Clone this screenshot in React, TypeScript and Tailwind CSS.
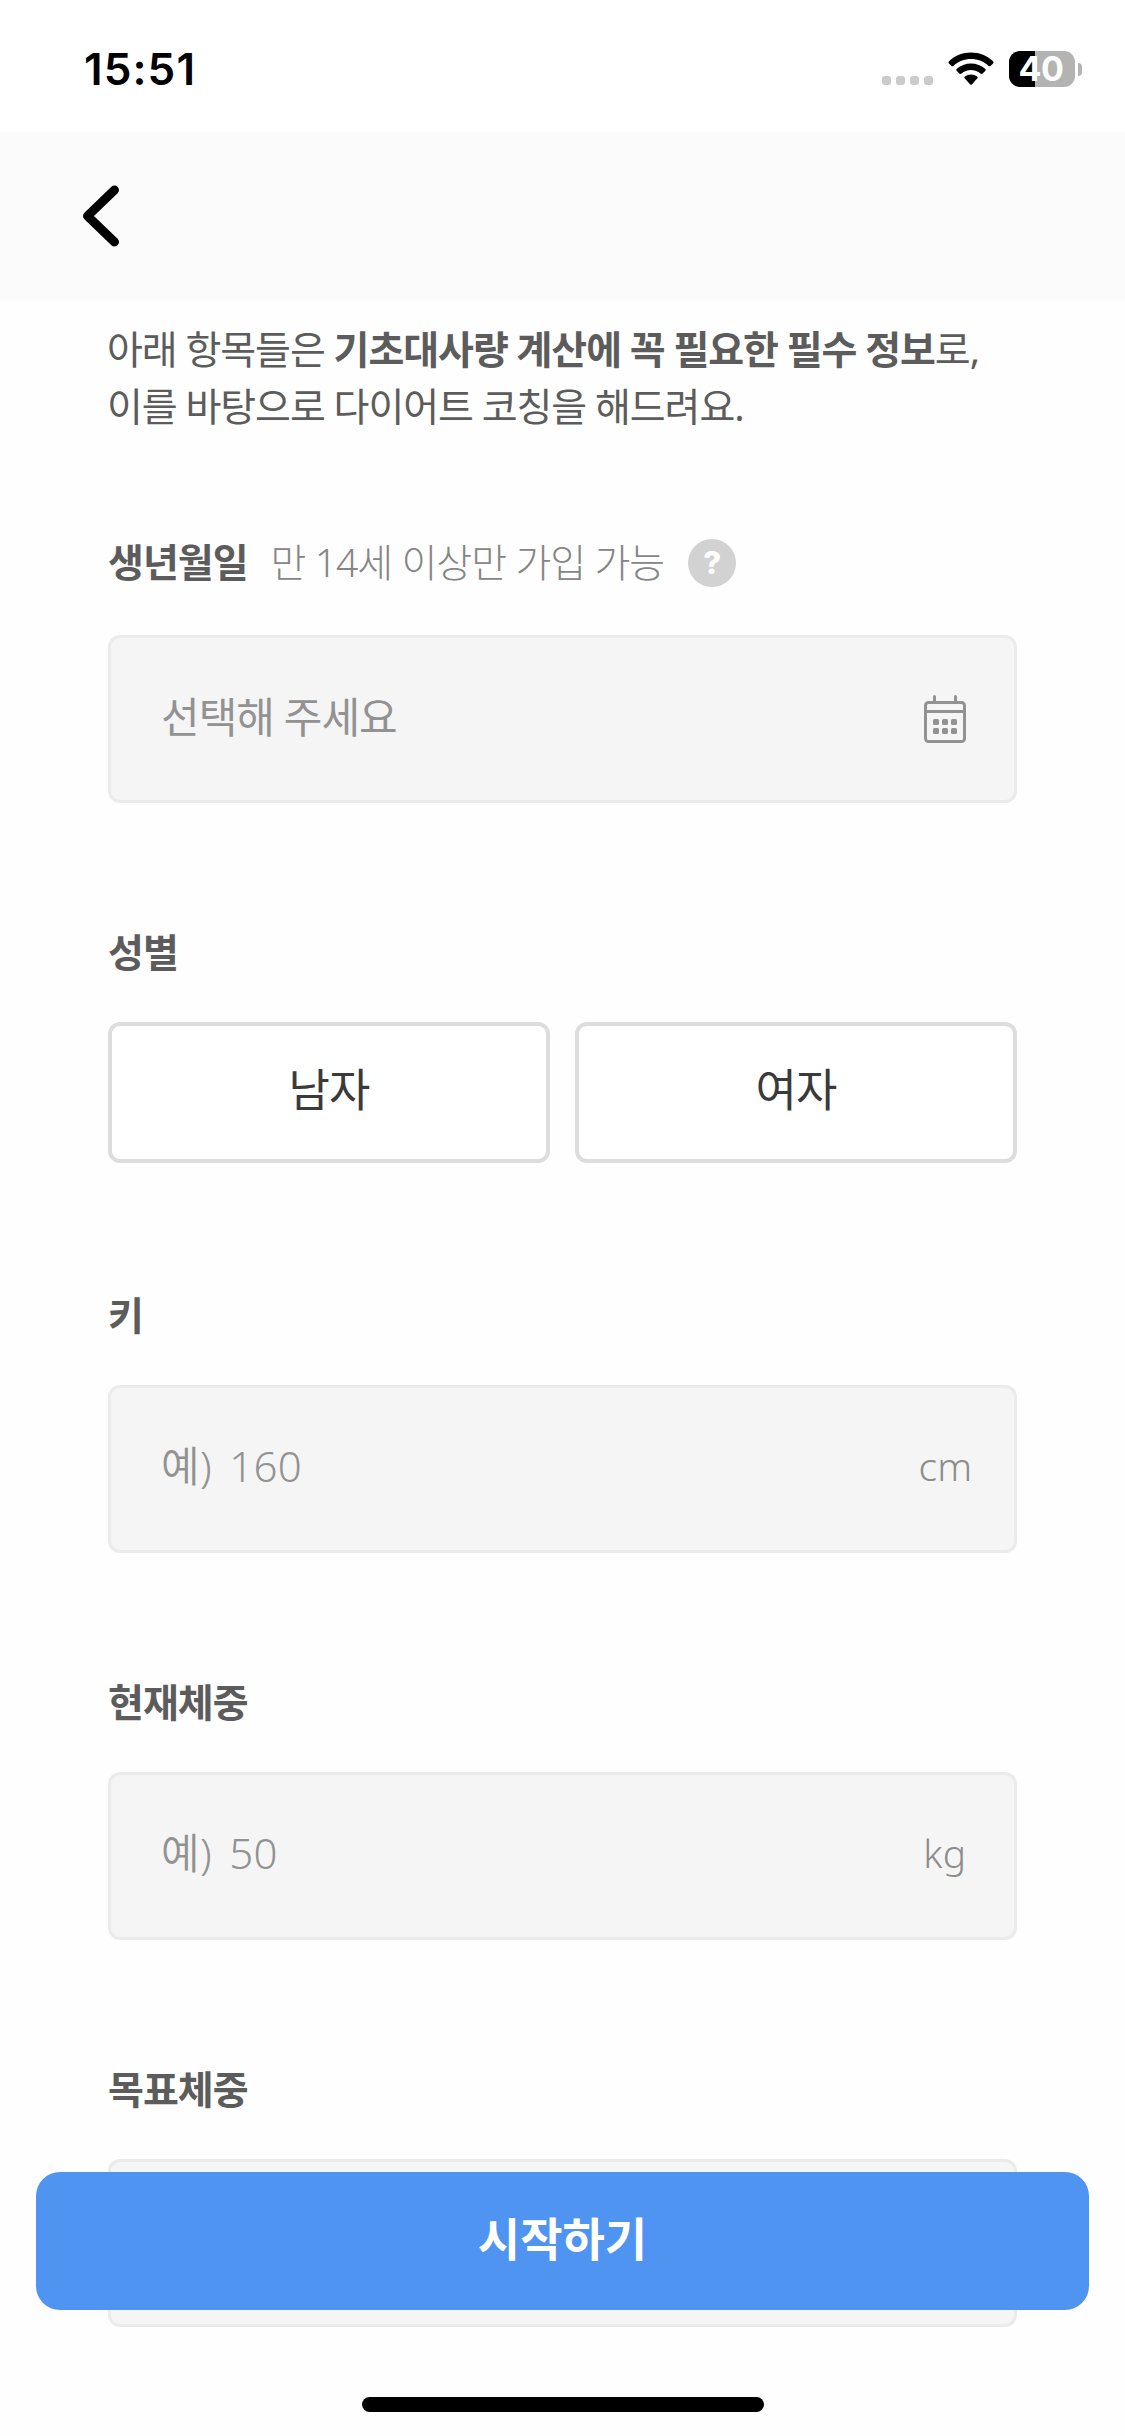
import { useState } from 'react'
import type { ReactNode } from 'react'

function StatusBar() {
  return (
    <div className="flex h-[132px] items-start justify-between bg-white pr-[43px] pl-[84px]">
      <div className="mt-[42px] font-['Inter',sans-serif] text-[44px] leading-[54px] font-semibold tracking-[1.1px] text-black">15:51</div>

      <div className="mt-[51px] flex h-9 items-center">
        <div className="mt-[23px] flex gap-[5px]">
          {[0, 1, 2, 3].map((dot) => (
            <span key={dot} className="size-[9px] rounded-[3px] bg-[#cbcbcb]" />
          ))}
        </div>

        {/* Wifi */}
        <svg className="ml-[15px] h-[34px] w-[46px]" viewBox="0 0 46 34" fill="black">
          <path d="M23 0.6c8.6 0 16.200 3.300 22 8.700.7.700.7 1.400.1 2.100l-2.400 2.400c-.7.700-1.400.7-2.100.1C35.900 9.600 29.800 7.100 23 7.100S10.100 9.600 5.400 13.900c-.7.600-1.400.6-2.100-.1L.9 11.400c-.6-.7-.6-1.400.1-2.100C6.800 3.900 14.400.6 23 .6z" />
          <path d="M23 11.400c5.400 0 10.300 2 14.100 5.400.8.700.8 1.400.1 2.100l-2.600 2.600c-.7.700-1.300.7-2.100.1-2.600-2.200-5.900-3.500-9.500-3.500s-6.900 1.300-9.500 3.500c-.8.600-1.400.6-2.100-.1l-2.600-2.600c-.7-.7-.7-1.400.1-2.100C12.700 13.400 17.600 11.400 23 11.400z" />
          <path d="M23 22.400c2.300 0 4.400.8 6.100 2.100.8.600.8 1.400.1 2.100l-5.200 5.600c-.7.700-1.300.7-2 0l-5.200-5.600c-.7-.7-.7-1.500.1-2.100 1.700-1.300 3.800-2.100 6.100-2.100z" />
        </svg>

        {/* Battery */}
        <div className="ml-[15px] flex h-9 w-[66px] items-center justify-center rounded-[11px] bg-linear-to-r from-black from-40% to-[#b3b3b3] to-40% pr-0.5 font-['Inter',sans-serif] text-[34px] leading-9 font-bold tracking-[-0.5px] text-white">
          40
        </div>
        <span className="ml-[3px] h-[13px] w-1 rounded-r-full bg-[#b3b3b3]" />
      </div>
    </div>
  )
}

function CalendarIcon() {
  return (
    <svg className="h-12 w-[42px]" viewBox="0 0 42 48" fill="none" stroke="#929292">
      <path d="M10.500 1.500V7M31.500 1.500V7" strokeWidth="3" strokeLinecap="round" />
      <rect x="1.500" y="7.500" width="39" height="39" rx="3" strokeWidth="3" />
      <path d="M1.500 16.500H40.500" strokeWidth="3" />
      <g fill="#929292" stroke="none">
        <rect x="9" y="24" width="6" height="6" rx="1.500" />
        <rect x="18" y="24" width="6" height="6" rx="1.500" />
        <rect x="27" y="24" width="6" height="6" rx="1.500" />
        <rect x="9" y="33" width="6" height="6" rx="1.500" />
        <rect x="18" y="33" width="6" height="6" rx="1.500" />
        <rect x="27" y="33" width="6" height="6" rx="1.500" />
      </g>
    </svg>
  )
}

function Label({ children }: { children: ReactNode }) {
  return <span className="text-[39px] leading-[58px] font-bold tracking-[-1px] text-[#5c5c5c]">{children}</span>
}

function Field({ children }: { children?: ReactNode }) {
  return (
    <div className="flex h-[168px] w-full items-center justify-between rounded-xl border-3 border-[#ebebeb] bg-[#f5f5f5] pl-[50px] text-[#929292]">
      {children}
    </div>
  )
}

function NumberField({ label, example, unit }: { label: string; example: string; unit: ReactNode }) {
  return (
    <section>
      <div className="flex h-[58px] items-center">
        <Label>{label}</Label>
      </div>
      <div className="mt-[41px]">
        <Field>
          <span className="pb-1.5 text-[42px] leading-[60px] font-[350] tracking-[0.3px] [word-spacing:6px]">{example}</span>
          {unit}
        </Field>
      </div>
    </section>
  )
}

export default function App() {
  const [gender, setGender] = useState('')

  return (
    <div className="relative flex h-[2436px] w-[1125px] flex-col overflow-hidden bg-[#fefefe] font-['Noto_Sans','Noto_Sans_CJK_KR',sans-serif]">
      <StatusBar />

      <header className="flex h-[168px] shrink-0 items-center bg-[#fbfbfb] pl-[81px]">
        <button aria-label="뒤로">
          <svg className="h-[62px] w-10" viewBox="0 0 40 62" fill="none" stroke="black" strokeWidth="9" strokeLinecap="round" strokeLinejoin="round">
            <path d="M33.500 5L6.500 31L33.500 57" />
          </svg>
        </button>
      </header>

      <main className="flex flex-col px-[108px] pt-5">
        <p className="-ml-px text-[39px] leading-[57px] tracking-[-1.050px] [word-spacing:-0.3px] whitespace-nowrap text-[#5c5c5c]">
          아래 항목들은 <b>기초대사량 계산에 꼭 필요한 필수 정보</b>로,
          <br />
          이를 바탕으로 다이어트 코칭을 해드려요.
        </p>

        {/* Birthday */}
        <section className="mt-[99px]">
          <div className="flex h-[58px] items-center">
            <Label>생년월일</Label>
            <span className="ml-[23px] text-[39px] leading-[58px] font-light tracking-[-0.950px] text-[#858585]">만 14세 이상만 가입 가능</span>
            <span className="ml-6 mt-0.5 flex size-12 items-center justify-center rounded-full bg-[#d2d2d2] font-['Inter',sans-serif] text-[31px] font-extrabold text-white">
              ?
            </span>
          </div>
          <div className="mt-[44px]">
            <Field>
              <span className="pb-1 text-[42px] leading-[60px] tracking-[-1px]">선택해 주세요</span>
              <span className="mr-12">
                <CalendarIcon />
              </span>
            </Field>
          </div>
        </section>

        {/* Gender */}
        <section className="mt-[120px]">
          <div className="flex h-[58px] items-center">
            <Label>성별</Label>
          </div>
          <div className="mt-[41px] flex gap-[25px]">
            {['남자', '여자'].map((item) => (
              <button
                key={item}
                onClick={() => setGender(item)}
                aria-pressed={gender === item}
                className="h-[141px] flex-1 rounded-xl border-4 border-[#dddddd] bg-white pb-1.5 text-[45px] tracking-[-1px] text-[#3a3a3a]"
              >
                {item}
              </button>
            ))}
          </div>
        </section>

        {/* Body measurements */}
        <div className="mt-[123px] flex flex-col gap-[120px]">
          <NumberField label="키" example="예) 160" unit={<span className="mr-[42px] pb-1.5 text-[39px] font-[350] text-[#8c8c8c]">cm</span>} />
          <NumberField label="현재체중" example="예) 50" unit={<span className="mr-12 pb-1.5 text-[39px] font-[350] text-[#8c8c8c]">kg</span>} />
          <NumberField label="목표체중" example="" unit={null} />
        </div>
      </main>

      <div className="absolute inset-x-0 bottom-0 flex flex-col items-center px-9 pb-6">
        <button className="h-[138px] w-full rounded-3xl bg-[#5094f2] pb-1.5 text-[46px] font-bold text-white">시작하기</button>
        <div className="mt-[87px] h-[15px] w-[402px] rounded-full bg-black" />
      </div>
    </div>
  )
}
